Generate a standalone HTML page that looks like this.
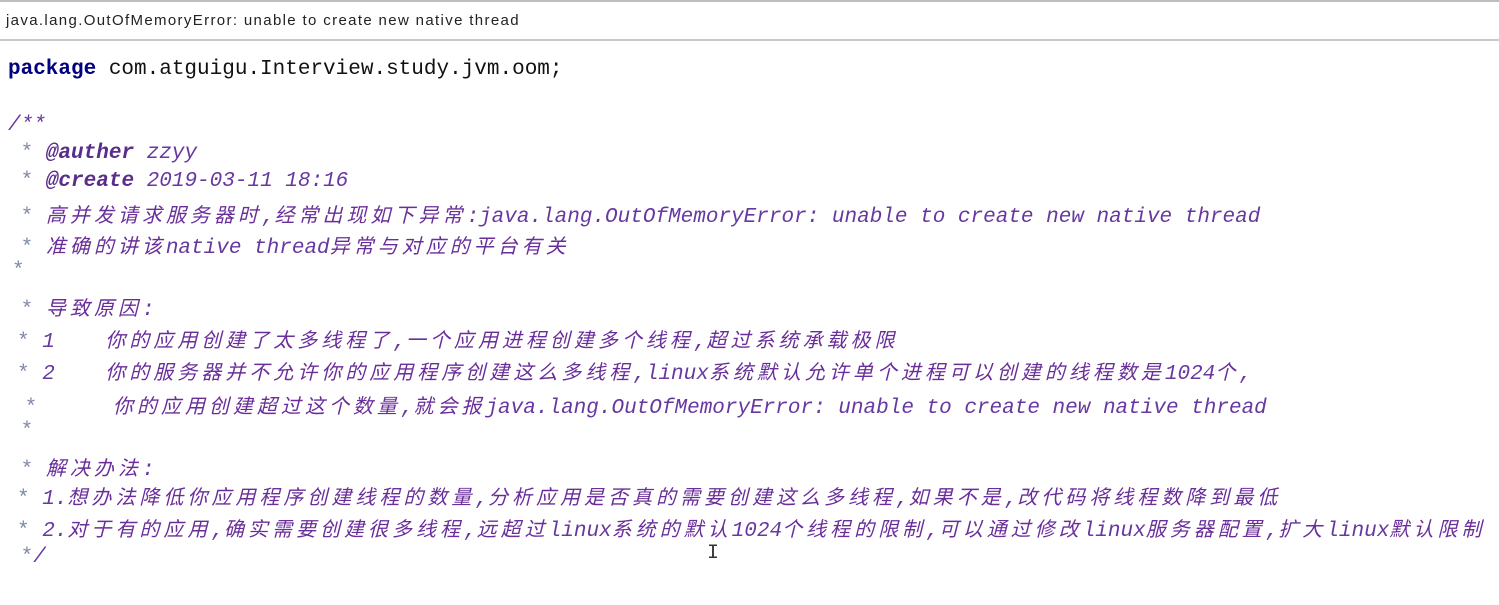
<!DOCTYPE html>
<html><head><meta charset="utf-8"><style>
body{margin:0;width:1499px;height:605px;background:#fff;position:relative;overflow:hidden}
.top{position:absolute;left:0;top:0;width:1499px;height:2px;background:#bdbdbd}
.bar{position:absolute;left:0;top:39px;width:1499px;height:2px;background:#c8c8c8}
.title{position:absolute;left:6px;top:12px;font:15px "Liberation Sans",sans-serif;color:#222;letter-spacing:1.35px;white-space:nowrap}
.l{position:absolute;height:26px;line-height:26px;white-space:pre;font-family:"Liberation Mono","Noto Sans CJK SC",monospace;font-size:21px;font-style:italic;color:#6638a0}
.c{letter-spacing:4px;font-family:"Noto Sans CJK SC",sans-serif;font-size:20px;color:#6a2e9a}
.s{color:#7f8aa8;font-style:normal}
.k{color:#000080;font-weight:bold;font-style:normal}
.t{font-weight:bold;color:#5a2d8a}
.n{color:#111;font-style:normal}
</style></head><body>
<div class="top"></div>
<div class="title">java.lang.OutOfMemoryError: unable to create new native thread</div>
<div class="bar"></div>
<div class="l" style="left:8px;top:57px"><span class="k">package</span><span class="n"> com.atguigu.Interview.study.jvm.oom;</span></div>
<div class="l" style="left:8px;top:113px">/**</div>
<div class="l" style="left:8px;top:141px"> <span class="s">*</span> <span class="t">@auther</span> zzyy</div>
<div class="l" style="left:8px;top:169px"> <span class="s">*</span> <span class="t">@create</span> 2019-03-11 18:16</div>
<div class="l" style="left:8px;top:201px"> <span class="s">*</span> <span class="c">高并发请求服务器时</span>,<span class="c">经常出现如下异常</span>:java.lang.OutOfMemoryError: unable to create new native thread</div>
<div class="l" style="left:8px;top:232px"> <span class="s">*</span> <span class="c">准确的讲该</span>native thread<span class="c">异常与对应的平台有关</span></div>
<div class="l" style="left:12px;top:259px"><span class="s">*</span></div>
<div class="l" style="left:8px;top:294px"> <span class="s">*</span> <span class="c">导致原因</span>:</div>
<div class="l" style="left:17px;top:326px"><span class="s">*</span> 1    <span class="c">你的应用创建了太多线程了</span>,<span class="c">一个应用进程创建多个线程</span>,<span class="c">超过系统承载极限</span></div>
<div class="l" style="left:17px;top:358px"><span class="s">*</span> 2    <span class="c">你的服务器并不允许你的应用程序创建这么多线程</span>,linux<span class="c">系统默认允许单个进程可以创建的线程数是</span>1024<span class="c">个</span>,</div>
<div class="l" style="left:12px;top:392px"> <span class="s">*</span>      <span class="c">你的应用创建超过这个数量</span>,<span class="c">就会报</span>java.lang.OutOfMemoryError: unable to create new native thread</div>
<div class="l" style="left:8px;top:419px"> <span class="s">*</span></div>
<div class="l" style="left:8px;top:454px"> <span class="s">*</span> <span class="c">解决办法</span>:</div>
<div class="l" style="left:17px;top:483px"><span class="s">*</span> 1.<span class="c">想办法降低你应用程序创建线程的数量</span>,<span class="c">分析应用是否真的需要创建这么多线程</span>,<span class="c">如果不是</span>,<span class="c">改代码将线程数降到最低</span></div>
<div class="l" style="left:17px;top:515px"><span class="s">*</span> 2.<span class="c">对于有的应用</span>,<span class="c">确实需要创建很多线程</span>,<span class="c">远超过</span>linux<span class="c">系统的默认</span>1024<span class="c">个线程的限制</span>,<span class="c">可以通过修改</span>linux<span class="c">服务器配置</span>,<span class="c">扩大</span>linux<span class="c">默认限制</span></div>
<div class="l" style="left:8px;top:545px"> <span class="s">*</span>/</div>
<div style="position:absolute;left:707px;top:542px;width:8px;height:22px;font:20px 'Liberation Mono',monospace;color:#333">I</div>
</body></html>
